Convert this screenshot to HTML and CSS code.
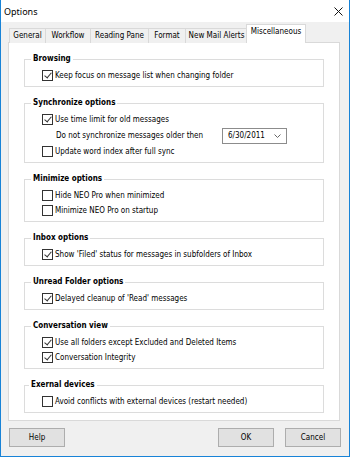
FILE: index.html
```html
<!DOCTYPE html>
<html>
<head>
    <title>Options</title>
    <link rel="stylesheet" href="styles.css">
</head>
<body>
    <div class="window">
        <div class="titlebar">
            <span class="title">Options</span>
            <svg class="close" width="9" height="9" viewBox="0 0 9 9"><path d="M0.5 0.5 L8.5 8.5 M8.5 0.5 L0.5 8.5" stroke="#111" stroke-width="1" fill="none"/></svg>
        </div>

        <div class="client">
            <div class="tabs">
                <div class="tab t-general">General</div>
                <div class="tab t-workflow">Workflow</div>
                <div class="tab t-reading">Reading Pane</div>
                <div class="tab t-format">Format</div>
                <div class="tab t-alerts">New Mail Alerts</div>
                <div class="tab active t-misc">Miscellaneous</div>
            </div>

            <div class="panel">
                <fieldset class="group">
                    <legend>Browsing</legend>
                    <div class="row"><span class="cb on"></span>Keep focus on message list when changing folder</div>
                </fieldset>

                <fieldset class="group">
                    <legend>Synchronize options</legend>
                    <div class="row"><span class="cb on"></span>Use time limit for old messages</div>
                    <div class="row date-row">
                        <span class="date-label">Do not synchronize messages older then</span>
                        <span class="datepicker">6/30/2011<svg class="chev" width="7" height="4" viewBox="0 0 7 4"><path d="M0.5 0.5 L3.5 3.5 L6.5 0.5" stroke="#666" fill="none"/></svg></span>
                    </div>
                    <div class="row"><span class="cb"></span>Update word index after full sync</div>
                </fieldset>

                <fieldset class="group">
                    <legend>Minimize options</legend>
                    <div class="row"><span class="cb"></span>Hide NEO Pro when minimized</div>
                    <div class="row"><span class="cb"></span>Minimize NEO Pro on startup</div>
                </fieldset>

                <fieldset class="group">
                    <legend>Inbox options</legend>
                    <div class="row"><span class="cb on"></span>Show 'Filed' status for messages in subfolders of Inbox</div>
                </fieldset>

                <fieldset class="group">
                    <legend>Unread Folder options</legend>
                    <div class="row"><span class="cb on"></span>Delayed cleanup of 'Read' messages</div>
                </fieldset>

                <fieldset class="group">
                    <legend>Conversation view</legend>
                    <div class="row"><span class="cb on"></span>Use all folders except Excluded and Deleted Items</div>
                    <div class="row"><span class="cb on"></span>Conversation Integrity</div>
                </fieldset>

                <fieldset class="group">
                    <legend class="legend-left">Exernal devices</legend>
                    <div class="row"><span class="cb"></span>Avoid conflicts with external devices (restart needed)</div>
                </fieldset>
            </div>

            <div class="buttons">
                <button class="btn">Help</button>
                <span class="spacer"></span>
                <button class="btn">OK</button>
                <button class="btn">Cancel</button>
            </div>
        </div>
    </div>
</body>
</html>
```

FILE: styles.css
```css
* { box-sizing: border-box; }
body { margin: 0; font-family: "DejaVu Sans Condensed", "DejaVu Sans", sans-serif; font-size: 8px; color: #000; }

.window { width: 350px; height: 457px; background: #f0f0f0; border: 1px solid #1883d7; border-top: none; }

.titlebar { height: 22px; background: #fff; display: flex; align-items: center; padding: 0 6px 0 3px; }
.title { font-family: "Noto Sans", sans-serif; font-size: 9px; color: #000; flex: 1; }
.close { margin-right: 0; }

.client { padding: 0 9px 0 7px; }

.tabs { display: flex; align-items: flex-end; height: 21px; padding-left: 1px; margin-bottom: -1px; }
.tab { height: 15px; line-height: 14px; background: #f0f0f0; border: 1px solid #d9d9d9; border-bottom: none; margin-right: -1px; text-align: center; color: #000; }
.tab.active { height: 19px; line-height: 13px; background: #fff; position: relative; z-index: 1; margin-left: -1px; }
.t-general { width: 37px; }
.t-workflow { width: 46px; }
.t-reading { width: 59px; }
.t-format { width: 38px; }
.t-alerts { width: 63px; }
.t-misc { width: 60px; }

.panel { height: 379px; background: #fff; border: 1px solid #d9d9d9; padding-top: 0; }

.group { margin: 10px 15px 0 15px; padding: 3px 0 3px 17px; border: 1px solid #dcdcdc; min-width: 0; }
.group legend { font-weight: bold; line-height: 12px; padding: 0 2px; margin-left: -11px; }
.group legend.legend-left { margin-left: -13px; }

.row { display: flex; align-items: center; height: 15px; white-space: nowrap; }
.date-row { height: 17px; padding-left: 14px; }
.date-label { width: 166px; }

.cb { width: 11px; height: 11px; border: 1px solid #333; background: #fff; margin-right: 2px; flex: none; position: relative; }
.cb.on::after { content: ""; position: absolute; left: 3px; top: 0px; width: 3px; height: 6px; border: solid #333; border-width: 0 1px 1px 0; transform: rotate(40deg); }

.datepicker { width: 65px; height: 16px; border: 1px solid #8c8c8c; display: flex; align-items: center; padding-left: 5px; background: #fff; }
.chev { margin-left: auto; margin-right: 5px; }

.buttons { display: flex; gap: 11px; margin-top: 7px; padding-left: 1px; margin-right: -1px; }
.spacer { flex: 1; }
.btn { width: 56px; height: 19px; background: #e1e1e1; border: 1px solid #adadad; font-family: inherit; font-size: 8px; color: #000; padding: 0; }
```
